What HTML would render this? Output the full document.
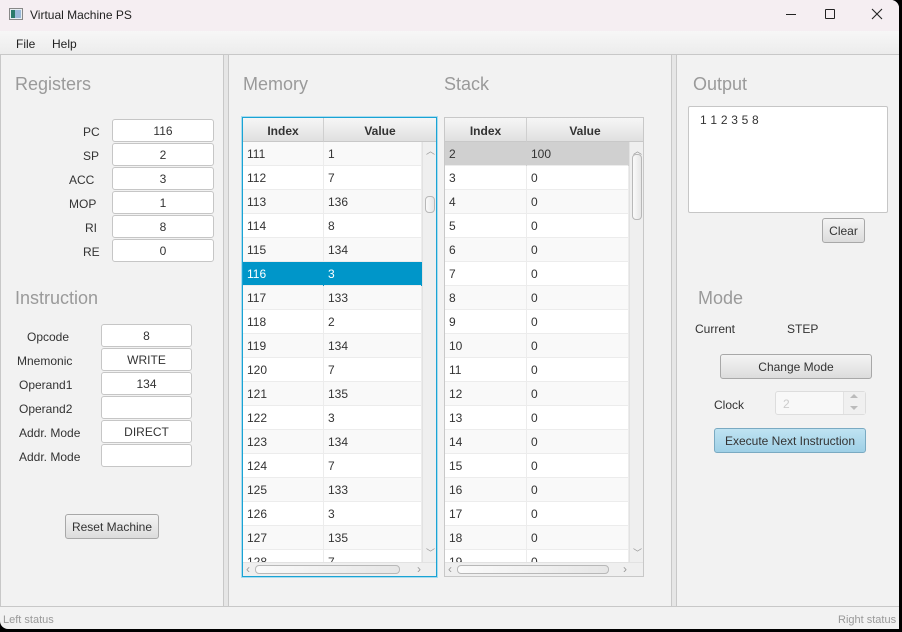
<!DOCTYPE html>
<html><head><meta charset="utf-8"><style>
*{box-sizing:border-box;margin:0;padding:0}
body{width:902px;height:632px;background:#000;font-family:"Liberation Sans",sans-serif;font-size:12px;color:#333;position:relative;overflow:hidden}
.a{position:absolute}
#win{position:absolute;left:0;top:0;width:899px;height:629px;background:#f2f2f2;overflow:hidden;border-radius:0 8px 0 8px}
.title{left:0;top:0;width:899px;height:31px;background:#f5eef2}
.menu{left:0;top:31px;width:899px;height:24px;background:linear-gradient(#f7f7f7,#ececec);border-bottom:1px solid #c8c8c8}
.h{color:#9a9a9a;font-size:18px}
.f{background:#fff;border:1px solid #c6c6c6;border-radius:3px;text-align:center;line-height:23px;height:23px;font-size:12px;color:#333}
.lb{font-size:12px;color:#333}
.btn{border:1px solid #a8a8a8;border-radius:3px;background:linear-gradient(#f4f4f4,#dcdcdc);text-align:center;font-size:12px;color:#333}
.tbl{background:#fff;overflow:hidden}
.hd{position:absolute;top:0;height:24px;background:linear-gradient(#f6f6f6,#e0e0e0);border-right:1px solid #cfcfcf;border-bottom:1px solid #c8c8c8;font-weight:bold;text-align:center;line-height:26px;font-size:12px}
.row{position:absolute;left:0;height:24px;line-height:25px;font-size:12px;color:#333;border-bottom:1px solid #ececec}
.row span{position:absolute;top:0;height:24px;padding-left:4px;border-right:1px solid #ececec}
.vs{position:absolute;background:#efefef;border-left:1px solid #e2e2e2}
.thumb{position:absolute;background:linear-gradient(90deg,#fafafa,#e6e6e6);border:1px solid #b8b8b8;border-radius:4px}
</style></head><body>
<div id="win">
<div class="a title"></div>
<svg class="a" style="left:9px;top:8px" width="14" height="12"><rect x="0.5" y="0.5" width="13" height="11" fill="#e8eef2" stroke="#888"/><rect x="2" y="2" width="4" height="8" fill="#2a7a6a"/><rect x="6" y="2" width="6" height="8" fill="#9ab8d8"/></svg>
<div class="a" style="left:30px;top:8px;font-size:12px;color:#222">Virtual Machine PS</div>
<div class="a" style="left:786px;top:14px;width:10px;height:1px;background:#222"></div>
<div class="a" style="left:825px;top:9px;width:10px;height:10px;border:1px solid #222;border-radius:1px"></div>
<svg class="a" style="left:871px;top:8px" width="12" height="12"><path d="M1 1L11 11M11 1L1 11" stroke="#222" stroke-width="1.1"/></svg>
<div class="a menu"></div>
<div class="a" style="left:16px;top:37px;color:#222">File</div>
<div class="a" style="left:52px;top:37px;color:#222">Help</div>

<div class="a" style="left:0;top:55px;width:224px;height:552px;border:1px solid #c8c8c8;border-top:none"></div>
<div class="a" style="left:223px;top:55px;width:6px;height:552px;background:#e6e6e6;border-left:1px solid #c8c8c8;border-right:1px solid #c8c8c8"></div>
<div class="a" style="left:671px;top:55px;width:6px;height:552px;background:#e6e6e6;border-left:1px solid #c8c8c8;border-right:1px solid #c8c8c8"></div>
<div class="a" style="left:0;top:606px;width:899px;height:1px;background:#c8c8c8"></div>
<div class="a" style="left:3px;top:614px;color:#999;font-size:11px">Left status</div>
<div class="a" style="left:838px;top:614px;color:#999;font-size:11px">Right status</div>

<div class="a h" style="left:15px;top:74px">Registers</div>
<div class="a lb" style="left:83px;top:125px">PC</div>
<div class="a lb" style="left:83px;top:149px">SP</div>
<div class="a lb" style="left:69px;top:173px">ACC</div>
<div class="a lb" style="left:69px;top:197px">MOP</div>
<div class="a lb" style="left:85px;top:221px">RI</div>
<div class="a lb" style="left:83px;top:245px">RE</div>
<div class="a f" style="left:112px;top:119px;width:102px">116</div>
<div class="a f" style="left:112px;top:143px;width:102px">2</div>
<div class="a f" style="left:112px;top:167px;width:102px">3</div>
<div class="a f" style="left:112px;top:191px;width:102px">1</div>
<div class="a f" style="left:112px;top:215px;width:102px">8</div>
<div class="a f" style="left:112px;top:239px;width:102px">0</div>

<div class="a h" style="left:15px;top:288px">Instruction</div>
<div class="a lb" style="left:27px;top:330px">Opcode</div>
<div class="a lb" style="left:17px;top:354px">Mnemonic</div>
<div class="a lb" style="left:19px;top:378px">Operand1</div>
<div class="a lb" style="left:19px;top:402px">Operand2</div>
<div class="a lb" style="left:19px;top:426px">Addr. Mode</div>
<div class="a lb" style="left:19px;top:450px">Addr. Mode</div>
<div class="a f" style="left:101px;top:324px;width:91px">8</div>
<div class="a f" style="left:101px;top:348px;width:91px">WRITE</div>
<div class="a f" style="left:101px;top:372px;width:91px">134</div>
<div class="a f" style="left:101px;top:396px;width:91px"></div>
<div class="a f" style="left:101px;top:420px;width:91px">DIRECT</div>
<div class="a f" style="left:101px;top:444px;width:91px"></div>
<div class="a btn" style="left:65px;top:514px;width:94px;height:25px;line-height:24px">Reset Machine</div>

<div class="a h" style="left:243px;top:74px">Memory</div>
<div class="a h" style="left:444px;top:74px">Stack</div>

<div class="a tbl" style="left:242px;top:117px;width:195px;height:460px;border:1px solid #1aa3d4;box-shadow:0 0 0 1px #a9dcef">
<div class="hd" style="left:0;width:81px">Index</div>
<div class="hd" style="left:81px;width:112px;border-right:none">Value</div>
<div style="position:absolute;left:0;top:24px;width:179px;height:420px;overflow:hidden">
<div class="row" style="top:0;width:179px;background:#f9f9f9"><span style="left:0;width:81px">111</span><span style="left:81px;width:98px">1</span></div>
<div class="row" style="top:24px;width:179px"><span style="left:0;width:81px">112</span><span style="left:81px;width:98px">7</span></div>
<div class="row" style="top:48px;width:179px;background:#f9f9f9"><span style="left:0;width:81px">113</span><span style="left:81px;width:98px">136</span></div>
<div class="row" style="top:72px;width:179px"><span style="left:0;width:81px">114</span><span style="left:81px;width:98px">8</span></div>
<div class="row" style="top:96px;width:179px;background:#f9f9f9"><span style="left:0;width:81px">115</span><span style="left:81px;width:98px">134</span></div>
<div class="row" style="top:120px;width:179px;background:#0096c9;color:#fff"><span style="left:0;width:81px;border-color:#0096c9">116</span><span style="left:81px;width:98px;border-color:#0096c9">3</span></div>
<div class="row" style="top:144px;width:179px;background:#f9f9f9"><span style="left:0;width:81px">117</span><span style="left:81px;width:98px">133</span></div>
<div class="row" style="top:168px;width:179px"><span style="left:0;width:81px">118</span><span style="left:81px;width:98px">2</span></div>
<div class="row" style="top:192px;width:179px;background:#f9f9f9"><span style="left:0;width:81px">119</span><span style="left:81px;width:98px">134</span></div>
<div class="row" style="top:216px;width:179px"><span style="left:0;width:81px">120</span><span style="left:81px;width:98px">7</span></div>
<div class="row" style="top:240px;width:179px;background:#f9f9f9"><span style="left:0;width:81px">121</span><span style="left:81px;width:98px">135</span></div>
<div class="row" style="top:264px;width:179px"><span style="left:0;width:81px">122</span><span style="left:81px;width:98px">3</span></div>
<div class="row" style="top:288px;width:179px;background:#f9f9f9"><span style="left:0;width:81px">123</span><span style="left:81px;width:98px">134</span></div>
<div class="row" style="top:312px;width:179px"><span style="left:0;width:81px">124</span><span style="left:81px;width:98px">7</span></div>
<div class="row" style="top:336px;width:179px;background:#f9f9f9"><span style="left:0;width:81px">125</span><span style="left:81px;width:98px">133</span></div>
<div class="row" style="top:360px;width:179px"><span style="left:0;width:81px">126</span><span style="left:81px;width:98px">3</span></div>
<div class="row" style="top:384px;width:179px;background:#f9f9f9"><span style="left:0;width:81px">127</span><span style="left:81px;width:98px">135</span></div>
<div class="row" style="top:408px;width:179px"><span style="left:0;width:81px">128</span><span style="left:81px;width:98px">7</span></div>
</div>
<div class="vs" style="left:179px;top:24px;width:14px;height:420px"><div style="position:absolute;left:3px;top:2px;color:#999;font-size:9px">︿</div><div class="thumb" style="left:2px;top:54px;width:10px;height:17px"></div><div style="position:absolute;left:3px;top:404px;color:#999;font-size:9px">﹀</div></div>
<div class="vs" style="left:0;top:444px;width:193px;height:14px;border-left:none;border-top:1px solid #e2e2e2"><div style="position:absolute;left:3px;top:-1px;color:#999">‹</div><div class="thumb" style="left:12px;top:2px;width:145px;height:9px"></div><div style="position:absolute;left:174px;top:-1px;color:#999">›</div></div>
</div>

<div class="a tbl" style="left:444px;top:117px;width:200px;height:460px;border:1px solid #c8c8c8">
<div class="hd" style="left:0;width:82px">Index</div>
<div class="hd" style="left:82px;width:116px;border-right:none">Value</div>
<div style="position:absolute;left:0;top:24px;width:184px;height:420px;overflow:hidden">
<div class="row" style="top:0;width:184px;background:#d0d0d0"><span style="left:0;width:82px;border-color:#d0d0d0">2</span><span style="left:82px;width:102px;border-color:#d0d0d0">100</span></div>
<div class="row" style="top:24px;width:184px"><span style="left:0;width:82px">3</span><span style="left:82px;width:102px">0</span></div>
<div class="row" style="top:48px;width:184px;background:#f9f9f9"><span style="left:0;width:82px">4</span><span style="left:82px;width:102px">0</span></div>
<div class="row" style="top:72px;width:184px"><span style="left:0;width:82px">5</span><span style="left:82px;width:102px">0</span></div>
<div class="row" style="top:96px;width:184px;background:#f9f9f9"><span style="left:0;width:82px">6</span><span style="left:82px;width:102px">0</span></div>
<div class="row" style="top:120px;width:184px"><span style="left:0;width:82px">7</span><span style="left:82px;width:102px">0</span></div>
<div class="row" style="top:144px;width:184px;background:#f9f9f9"><span style="left:0;width:82px">8</span><span style="left:82px;width:102px">0</span></div>
<div class="row" style="top:168px;width:184px"><span style="left:0;width:82px">9</span><span style="left:82px;width:102px">0</span></div>
<div class="row" style="top:192px;width:184px;background:#f9f9f9"><span style="left:0;width:82px">10</span><span style="left:82px;width:102px">0</span></div>
<div class="row" style="top:216px;width:184px"><span style="left:0;width:82px">11</span><span style="left:82px;width:102px">0</span></div>
<div class="row" style="top:240px;width:184px;background:#f9f9f9"><span style="left:0;width:82px">12</span><span style="left:82px;width:102px">0</span></div>
<div class="row" style="top:264px;width:184px"><span style="left:0;width:82px">13</span><span style="left:82px;width:102px">0</span></div>
<div class="row" style="top:288px;width:184px;background:#f9f9f9"><span style="left:0;width:82px">14</span><span style="left:82px;width:102px">0</span></div>
<div class="row" style="top:312px;width:184px"><span style="left:0;width:82px">15</span><span style="left:82px;width:102px">0</span></div>
<div class="row" style="top:336px;width:184px;background:#f9f9f9"><span style="left:0;width:82px">16</span><span style="left:82px;width:102px">0</span></div>
<div class="row" style="top:360px;width:184px"><span style="left:0;width:82px">17</span><span style="left:82px;width:102px">0</span></div>
<div class="row" style="top:384px;width:184px;background:#f9f9f9"><span style="left:0;width:82px">18</span><span style="left:82px;width:102px">0</span></div>
<div class="row" style="top:408px;width:184px"><span style="left:0;width:82px">19</span><span style="left:82px;width:102px">0</span></div>
</div>
<div class="vs" style="left:184px;top:24px;width:14px;height:420px"><div style="position:absolute;left:3px;top:2px;color:#999;font-size:9px">︿</div><div class="thumb" style="left:2px;top:12px;width:10px;height:66px"></div><div style="position:absolute;left:3px;top:404px;color:#999;font-size:9px">﹀</div></div>
<div class="vs" style="left:0;top:444px;width:198px;height:14px;border-left:none;border-top:1px solid #e2e2e2"><div style="position:absolute;left:3px;top:-1px;color:#999">‹</div><div class="thumb" style="left:12px;top:2px;width:152px;height:9px"></div><div style="position:absolute;left:178px;top:-1px;color:#999">›</div></div>
</div>

<div class="a h" style="left:693px;top:74px">Output</div>
<div class="a" style="left:688px;top:106px;width:200px;height:107px;background:#fff;border:1px solid #c6c6c6;border-radius:2px"></div>
<div class="a" style="left:700px;top:113px;font-size:12px;letter-spacing:0.2px">1 1 2 3 5 8</div>
<div class="a btn" style="left:822px;top:218px;width:43px;height:25px;line-height:24px">Clear</div>
<div class="a h" style="left:698px;top:288px">Mode</div>
<div class="a lb" style="left:695px;top:322px">Current</div>
<div class="a lb" style="left:787px;top:322px">STEP</div>
<div class="a btn" style="left:720px;top:354px;width:152px;height:25px;line-height:24px">Change Mode</div>
<div class="a lb" style="left:714px;top:398px">Clock</div>
<div class="a" style="left:775px;top:391px;width:91px;height:24px;background:#f8f8f8;border:1px solid #ddd;border-radius:3px"></div>
<div class="a" style="left:783px;top:397px;color:#ccc">2</div>
<div class="a" style="left:843px;top:392px;width:22px;height:22px;border-left:1px solid #e2e2e2;background:#f0f0f0"></div>
<div class="a" style="left:850px;top:394px;width:0;height:0;border:4px solid transparent;border-bottom:4px solid #bbb;border-top:none"></div>
<div class="a" style="left:850px;top:406px;width:0;height:0;border:4px solid transparent;border-top:4px solid #bbb;border-bottom:none"></div>
<div class="a btn" style="left:714px;top:428px;width:152px;height:25px;line-height:24px;background:linear-gradient(#bfe3f2,#9fd0e6);border-color:#7aaac2">Execute Next Instruction</div>
</div>
</body></html>
